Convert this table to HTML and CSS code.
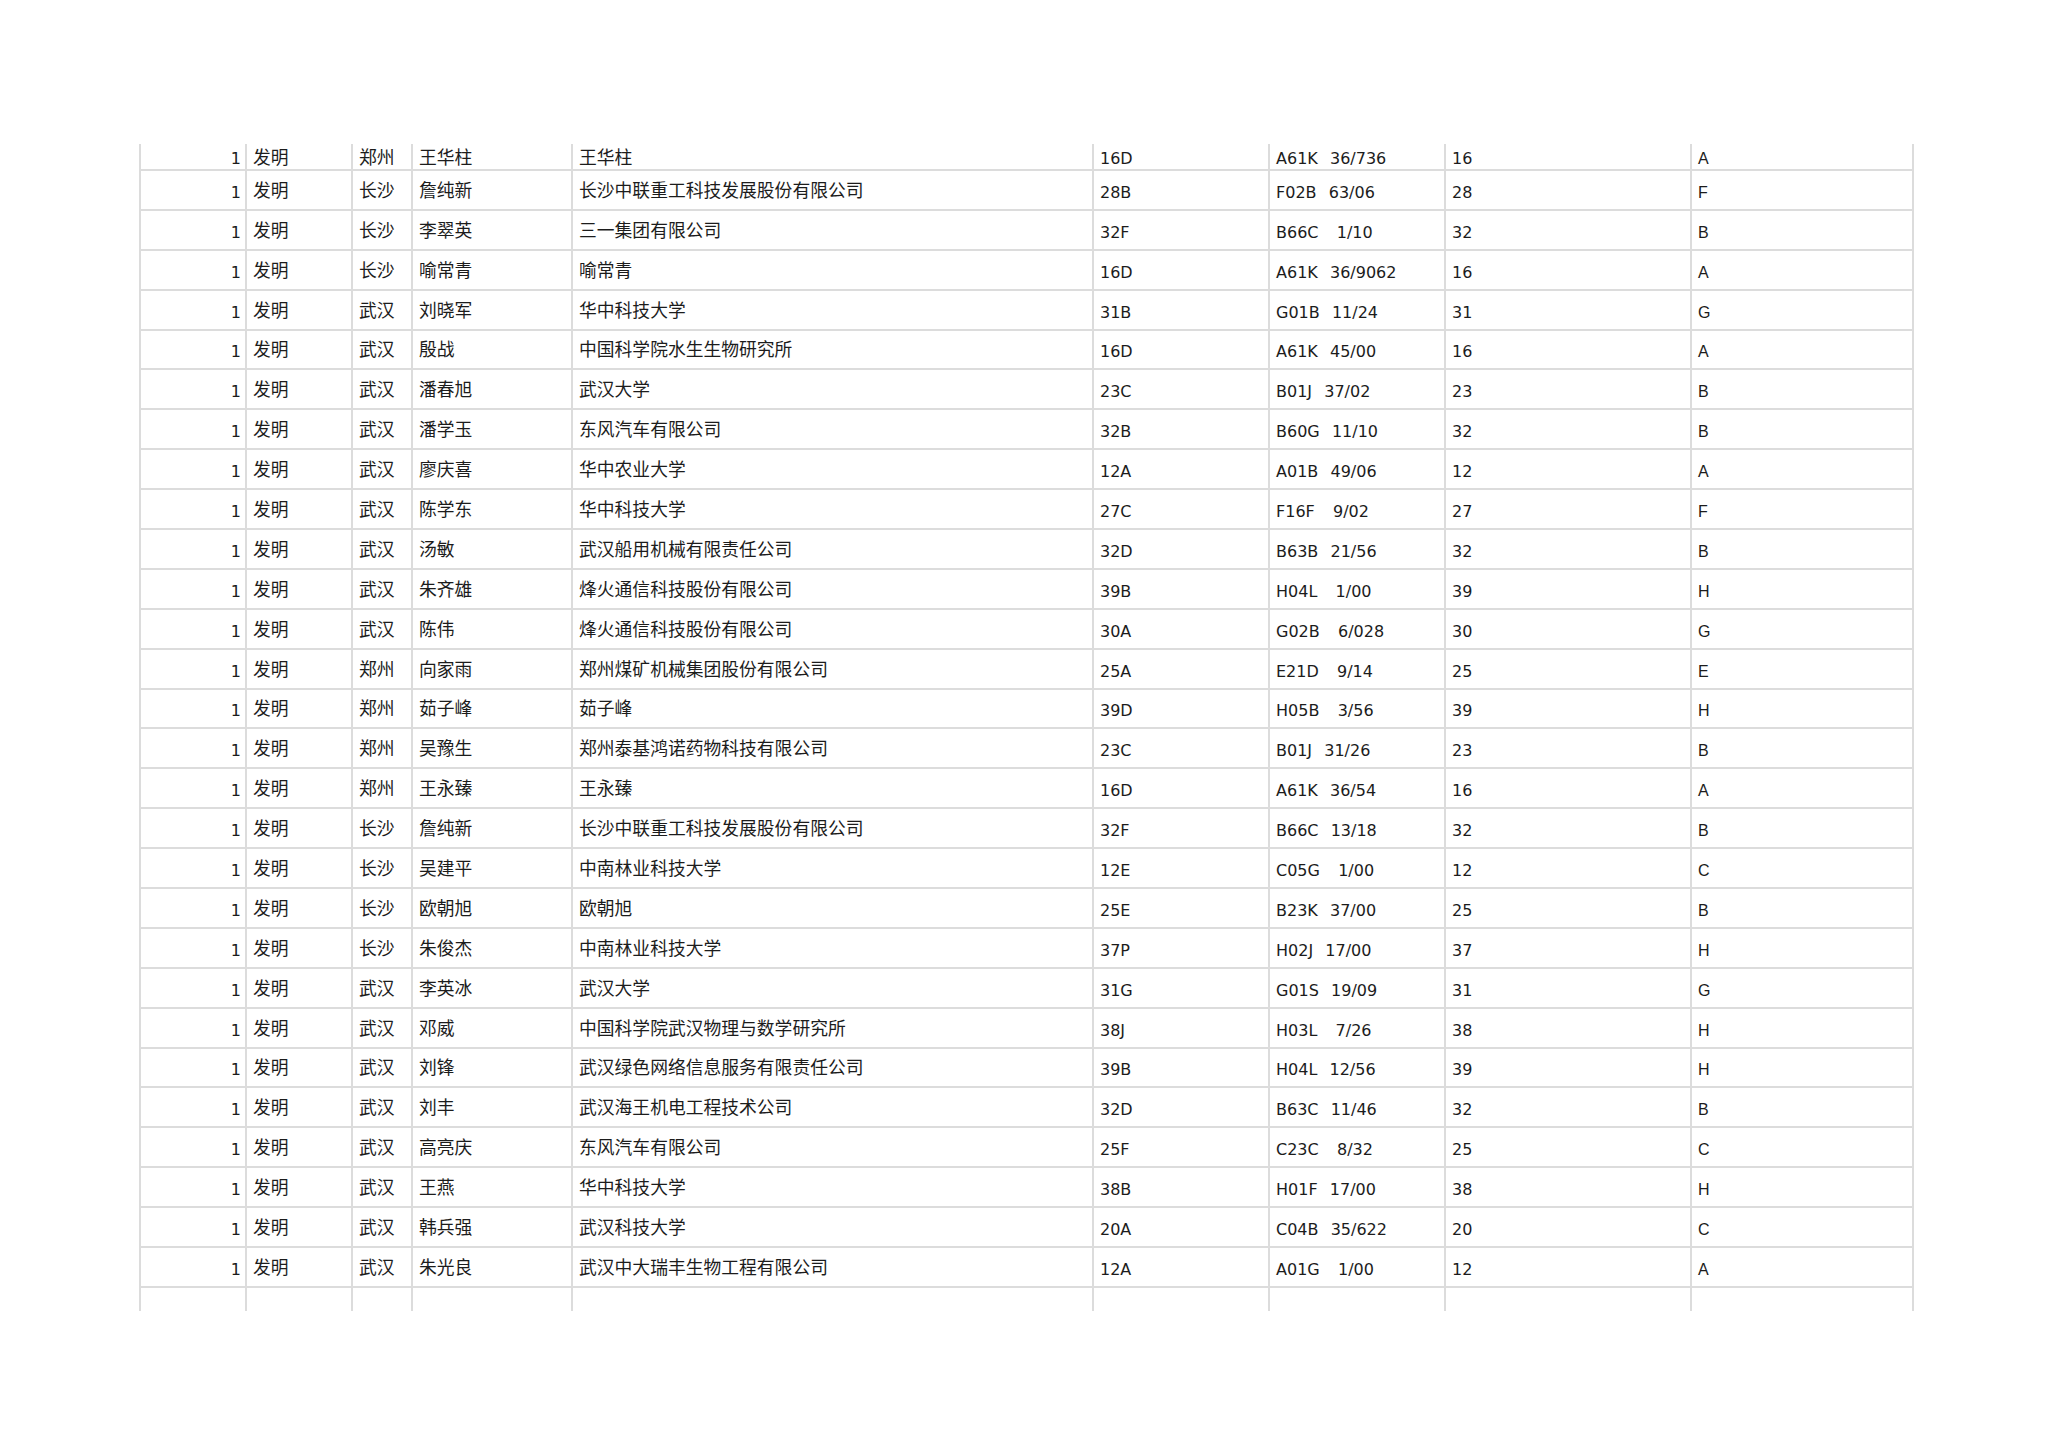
FILE: index.html
```html
<!DOCTYPE html>
<html lang="zh-CN">
<head>
<meta charset="utf-8">
<title>专利列表</title>
<link rel="stylesheet" href="styles.css">
</head>
<body>
<div class="page">
  <div class="sheet" id="sheet"></div>
</div>
<script src="app.js"></script>
</body>
</html>
```
FILE: app.js
```js
const rows = [
  ["郑州","王华柱","王华柱","16D","A61K  36/736","16","A"],
  ["长沙","詹纯新","长沙中联重工科技发展股份有限公司","28B","F02B  63/06","28","F"],
  ["长沙","李翠英","三一集团有限公司","32F","B66C   1/10","32","B"],
  ["长沙","喻常青","喻常青","16D","A61K  36/9062","16","A"],
  ["武汉","刘晓军","华中科技大学","31B","G01B  11/24","31","G"],
  ["武汉","殷战","中国科学院水生生物研究所","16D","A61K  45/00","16","A"],
  ["武汉","潘春旭","武汉大学","23C","B01J  37/02","23","B"],
  ["武汉","潘学玉","东风汽车有限公司","32B","B60G  11/10","32","B"],
  ["武汉","廖庆喜","华中农业大学","12A","A01B  49/06","12","A"],
  ["武汉","陈学东","华中科技大学","27C","F16F   9/02","27","F"],
  ["武汉","汤敏","武汉船用机械有限责任公司","32D","B63B  21/56","32","B"],
  ["武汉","朱齐雄","烽火通信科技股份有限公司","39B","H04L   1/00","39","H"],
  ["武汉","陈伟","烽火通信科技股份有限公司","30A","G02B   6/028","30","G"],
  ["郑州","向家雨","郑州煤矿机械集团股份有限公司","25A","E21D   9/14","25","E"],
  ["郑州","茹子峰","茹子峰","39D","H05B   3/56","39","H"],
  ["郑州","吴豫生","郑州泰基鸿诺药物科技有限公司","23C","B01J  31/26","23","B"],
  ["郑州","王永臻","王永臻","16D","A61K  36/54","16","A"],
  ["长沙","詹纯新","长沙中联重工科技发展股份有限公司","32F","B66C  13/18","32","B"],
  ["长沙","吴建平","中南林业科技大学","12E","C05G   1/00","12","C"],
  ["长沙","欧朝旭","欧朝旭","25E","B23K  37/00","25","B"],
  ["长沙","朱俊杰","中南林业科技大学","37P","H02J  17/00","37","H"],
  ["武汉","李英冰","武汉大学","31G","G01S  19/09","31","G"],
  ["武汉","邓威","中国科学院武汉物理与数学研究所","38J","H03L   7/26","38","H"],
  ["武汉","刘锋","武汉绿色网络信息服务有限责任公司","39B","H04L  12/56","39","H"],
  ["武汉","刘丰","武汉海王机电工程技术公司","32D","B63C  11/46","32","B"],
  ["武汉","高亮庆","东风汽车有限公司","25F","C23C   8/32","25","C"],
  ["武汉","王燕","华中科技大学","38B","H01F  17/00","38","H"],
  ["武汉","韩兵强","武汉科技大学","20A","C04B  35/622","20","C"],
  ["武汉","朱光良","武汉中大瑞丰生物工程有限公司","12A","A01G   1/00","12","A"]
];

const sheet = document.getElementById("sheet");
const kinds = ["num","cjk","cjk","cjk","cjk","lat","lat code","lat","let"];

function cell(text, kind, rowClass) {
  const d = document.createElement("div");
  d.className = "cell " + kind + " " + rowClass;
  const s = document.createElement("span");
  s.textContent = text;
  d.appendChild(s);
  return d;
}

rows.forEach((r, i) => {
  const rowClass = i === 0 ? "first" : "body";
  const values = ["1", "发明"].concat(r);
  values.forEach((v, j) => sheet.appendChild(cell(v, kinds[j], rowClass)));
});
for (let j = 0; j < 9; j++) {
  sheet.appendChild(cell("", kinds[j], "blank"));
}
```
FILE: styles.css
```css
html, body {
  margin: 0;
  padding: 0;
  background: #ffffff;
}

.page {
  padding: 144px 0 0 139px;
}

.sheet {
  display: grid;
  grid-template-columns: 108px 106px 60px 160px 521px 176px 176px 246px 222px;
  grid-auto-rows: auto;
  color: #1c1c1c;
}

.cell {
  box-sizing: border-box;
  border-right: 2px solid #dcdcdc;
  border-bottom: 2px solid #dcdcdc;
  display: flex;
  align-items: flex-end;
  padding-left: 6px;
  overflow: hidden;
  white-space: pre;
}

.cell span {
  line-height: 20px;
  display: block;
}

.cell.num {
  border-left: 2px solid #dcdcdc;
  justify-content: flex-end;
  padding-left: 0;
  padding-right: 4px;
}

.cell.body {
  height: 39.9px;
}

.cell.first {
  height: 27px;
}

.cell.blank {
  height: 23px;
  border-bottom: none;
}

.num, .lat {
  font-family: "DejaVu Sans", "Liberation Sans", sans-serif;
  font-size: 16px;
}

.code {
  word-spacing: 1px;
}

.let {
  font-family: "Liberation Sans", Arial, sans-serif;
  font-size: 16px;
}

.cjk {
  font-family: "Noto Sans CJK SC", "Noto Sans", sans-serif;
  font-size: 17.8px;
}

.cell.lat, .cell.num, .cell.let {
  padding-bottom: 6px;
}

.cell.cjk {
  padding-bottom: 10px;
}

.cell.first.lat, .cell.first.num, .cell.first.let {
  padding-bottom: 0;
}

.cell.first.cjk {
  padding-bottom: 3.5px;
}
```
